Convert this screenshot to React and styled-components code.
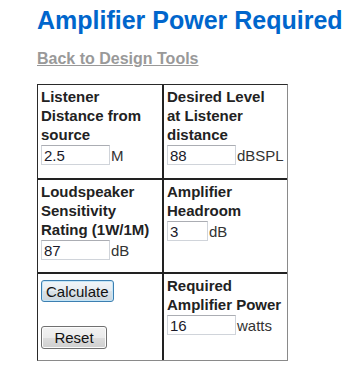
import React from "react";
import styled, { createGlobalStyle } from "styled-components";

const GlobalStyle = createGlobalStyle`
  body {
    margin: 0;
    background: #fff;
    font-family: "Liberation Sans", Arial, sans-serif;
  }
`;

const App = () => {
  return (
    <Page>
      <GlobalStyle />
      <Title>Amplifier Power Required</Title>
      <BackLink href="#">Back to Design Tools</BackLink>
      <Table>
        <colgroup>
          <col style={{ width: 126 }} />
          <col style={{ width: 123 }} />
        </colgroup>
        <tbody>
          <tr>
            <Cell $h={95}>
              <Label>Listener Distance from source</Label>
              <Field>
                <Input $w={69} defaultValue="2.5" />
                <Unit>M</Unit>
              </Field>
            </Cell>
            <Cell $h={95}>
              <Label>
                Desired Level
                <br />
                at Listener distance
              </Label>
              <Field>
                <Input $w={69} defaultValue="88" />
                <Unit>dBSPL</Unit>
              </Field>
            </Cell>
          </tr>
          <tr>
            <Cell $h={94}>
              <Label>Loudspeaker Sensitivity Rating (1W/1M)</Label>
              <Field>
                <Input $w={69} defaultValue="87" />
                <Unit>dB</Unit>
              </Field>
            </Cell>
            <Cell $h={94}>
              <Label>Amplifier Headroom</Label>
              <Field>
                <Input $w={41} defaultValue="3" />
                <Unit>dB</Unit>
              </Field>
            </Cell>
          </tr>
          <tr>
            <Cell $h={86}>
              <Buttons>
                <Button $primary>Calculate</Button>
                <Button $w={66}>Reset</Button>
              </Buttons>
            </Cell>
            <Cell $h={86}>
              <Label>Required Amplifier Power</Label>
              <Field>
                <Input $w={69} defaultValue="16" />
                <Unit>watts</Unit>
              </Field>
            </Cell>
          </tr>
        </tbody>
      </Table>
    </Page>
  );
};

const Page = styled.div`
  padding: 6px 0 0 37px;
  width: 324px;
`;

const Title = styled.h1`
  margin: 0;
  font-size: 25px;
  line-height: 29px;
  font-weight: bold;
  color: #0066cc;
  white-space: nowrap;
`;

const BackLink = styled.a`
  display: inline-block;
  margin-top: 15px;
  font-size: 16px;
  line-height: 18px;
  font-weight: bold;
  color: #999999;
  text-decoration: underline;
`;

const Table = styled.table`
  margin-top: 16px;
  border-collapse: separate;
  border-spacing: 0;
  width: 251px;
  table-layout: fixed;
  border: 1px solid;
  border-color: #2a2a2a #8a8a8a #8a8a8a #2a2a2a;

  tr:not(:last-child) > td {
    border-bottom: 2px solid #222;
  }
  td:first-child {
    border-right: 2px solid #222;
  }
`;

const Cell = styled.td`
  box-sizing: border-box;
  height: ${(p) => p.$h}px;
  padding: 2px 3px;
  vertical-align: top;
  font-size: 15px;
  color: #222;
`;

const Label = styled.div`
  font-weight: bold;
  line-height: 19px;
  color: #222;
`;

const Field = styled.div`
  display: flex;
  align-items: center;
  margin-top: 1px;
`;

const Input = styled.input`
  box-sizing: border-box;
  width: ${(p) => p.$w}px;
  height: 20px;
  margin: 0;
  padding: 0 2px;
  border: 1px solid #d0d4da;
  border-top-color: #abadb3;
  font-family: "Liberation Sans", Arial, sans-serif;
  font-size: 15px;
  color: #1a1a2a;
  background: #fff;
  outline: none;
`;

const Unit = styled.span`
  margin-left: 1px;
  font-size: 15px;
  color: #333;
`;

const Buttons = styled.div`
  display: flex;
  flex-direction: column;
  align-items: flex-start;
  gap: 24px;
  padding-top: 4px;
`;

const Button = styled.button`
  box-sizing: border-box;
  ${(p) => (p.$w ? `width: ${p.$w}px;` : "")}
  height: ${(p) => (p.$primary ? 22 : 23)}px;
  padding: 0 4px;
  border-radius: 3px;
  border: 1px solid ${(p) => (p.$primary ? "#3c7fb1" : "#707070")};
  box-shadow: inset 0 0 0 1px ${(p) => (p.$primary ? "#c4e5f7" : "#fcfcfc")};
  background: ${(p) =>
    p.$primary
      ? "linear-gradient(#f1f5f8 0%, #e6ecf1 50%, #d9e1e7 51%, #cdd6dd 100%)"
      : "linear-gradient(#f2f2f2 0%, #ebebeb 50%, #dddddd 51%, #cfcfcf 100%)"};
  font-family: "Liberation Sans", Arial, sans-serif;
  font-size: 15px;
  color: #111;
  cursor: pointer;
`;

export default App;
